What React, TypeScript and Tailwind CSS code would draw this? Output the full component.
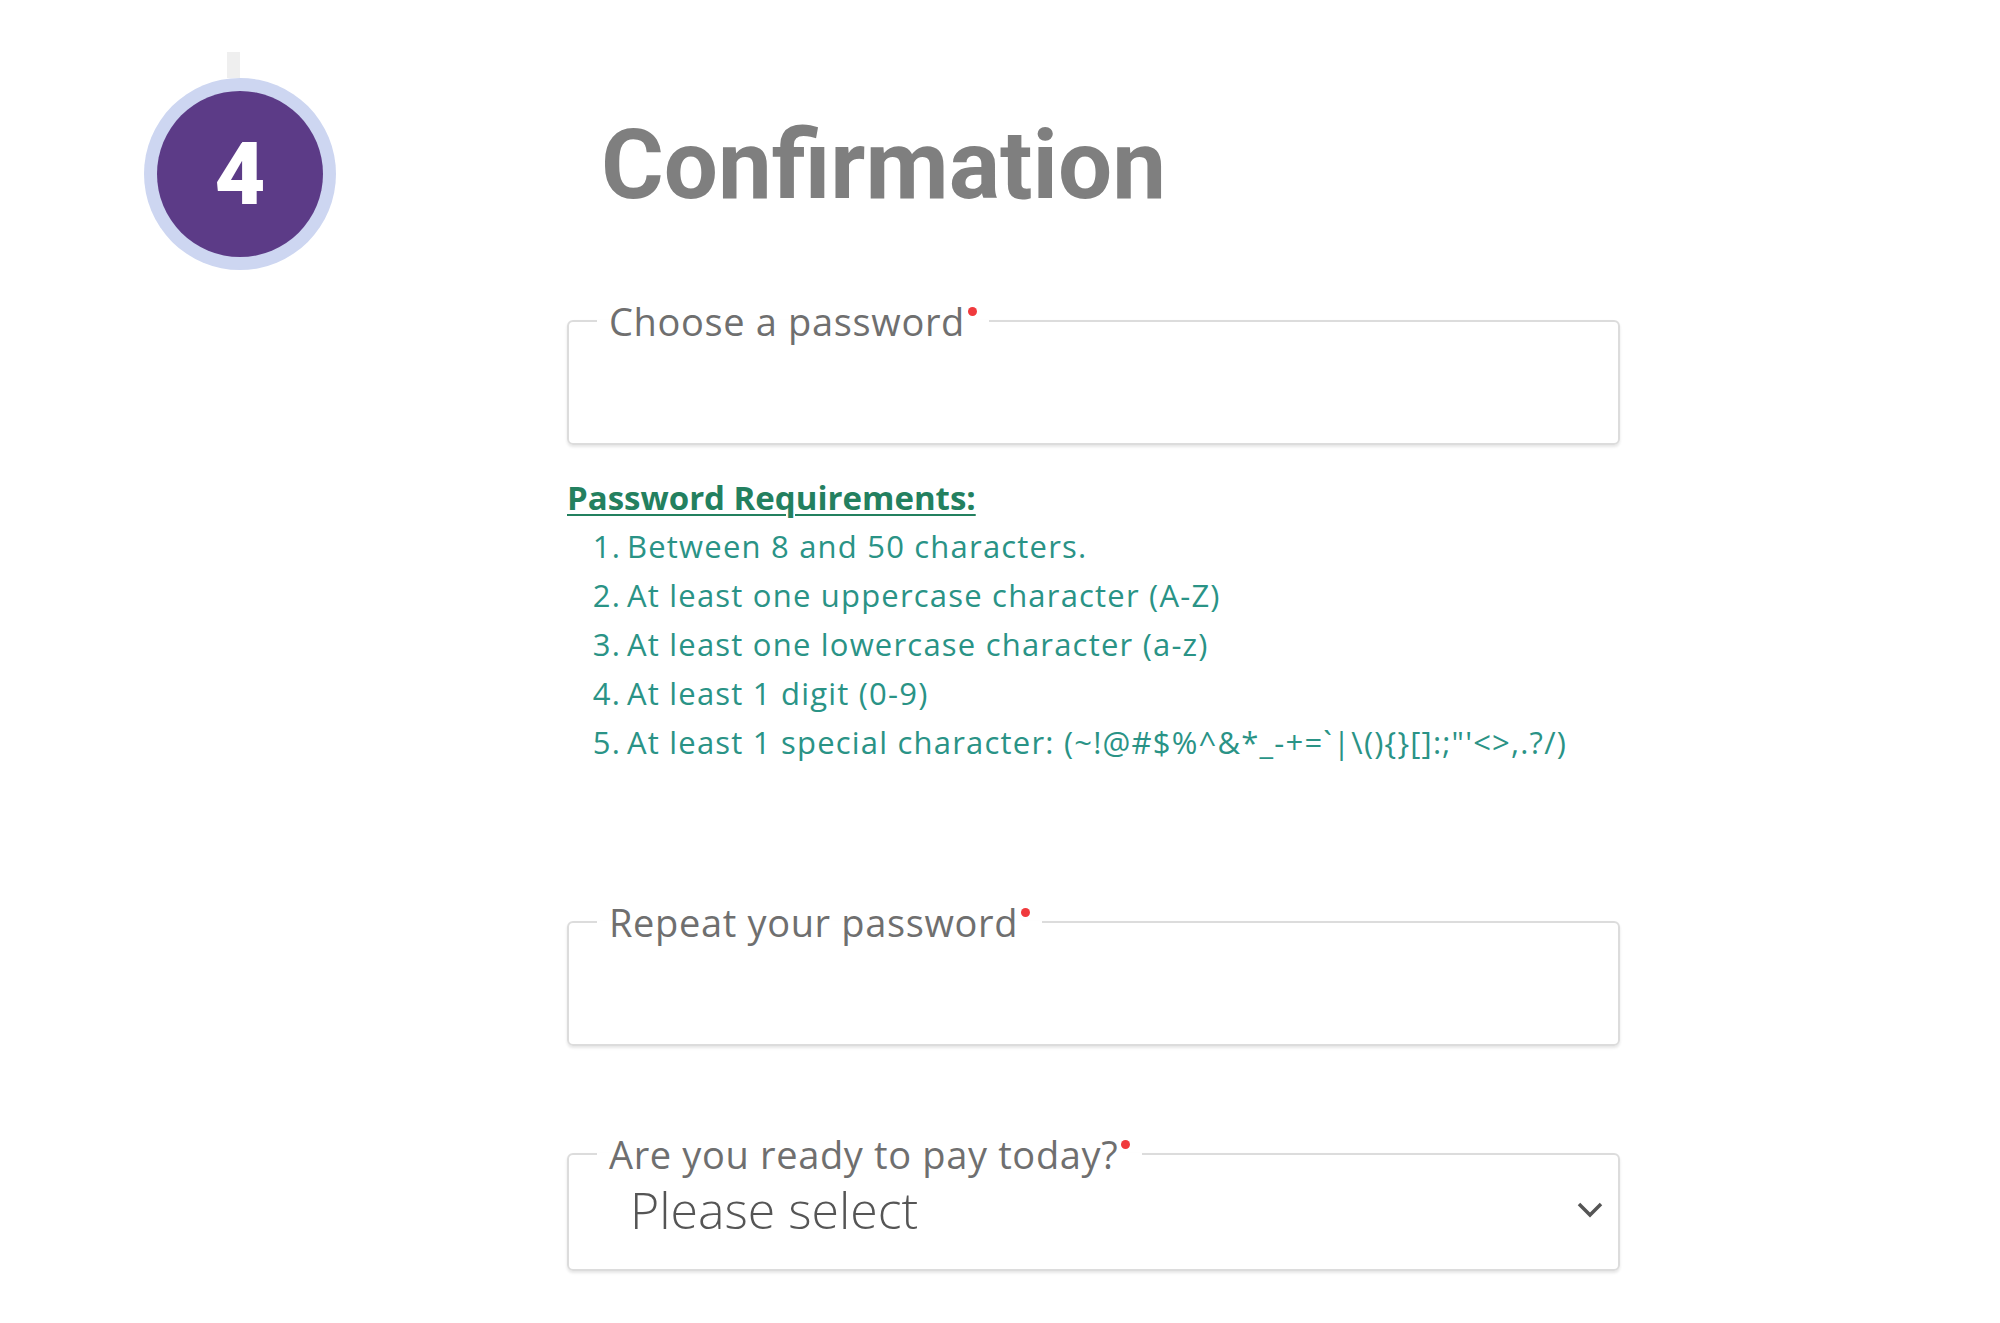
import React from "react";

const Req = () => (
  <span aria-label="required" className="ml-[3px] mt-[8px] inline-block h-[9px] w-[9px] rounded-full bg-[#f03a3d] align-top" />
);

function Field({ label, children, h }: { label: string; children?: React.ReactNode; h: string }) {
  return (
    <fieldset className="m-0 rounded-[6px] border-2 border-[#dcdcdc] p-0 shadow-[0_2px_3px_rgba(0,0,0,0.10)]">
      <legend
        className="ml-[28px] px-[12px] text-[38px] leading-[44px] tracking-[0.65px] text-[#6f6f6f]"
        style={{ fontFamily: "'Open Sans', sans-serif" }}
      >
        {label}
        <Req />
      </legend>
      <div className={h}>{children}</div>
    </fieldset>
  );
}

export default function App() {
  const items = [
    "Between 8 and 50 characters.",
    "At least one uppercase character (A-Z)",
    "At least one lowercase character (a-z)",
    "At least 1 digit (0-9)",
    "At least 1 special character: (~!@#$%^&*_-+=`|\\(){}[]:;\"'<>,.?/)",
  ];
  return (
    <div className="min-h-[1323px] w-[2000px] bg-white pt-[52px]">
      <div className="flex">
        <div className="ml-[144px] flex w-[192px] flex-col">
          <div className="ml-[83px] h-[26px] w-[13px] bg-[#efefef]" />
          <div className="h-[192px] w-[192px] rounded-full bg-[#cdd6f1] p-[13px]">
            <div className="flex h-full w-full items-center justify-center rounded-full bg-[#5c3b87]">
              <span className="text-[88px] font-black leading-none text-white" style={{ fontFamily: "Roboto, sans-serif" }}>
                4
              </span>
            </div>
          </div>
        </div>
        <div className="ml-[231px] flex w-[1053px] flex-col">
          <h1
            className="mt-[65px] pl-[34px] text-[96px] font-bold leading-none tracking-normal text-[#7f7f7f]"
            style={{ fontFamily: "Roboto, sans-serif" }}
          >
            Confirmation
          </h1>
          <div className="mt-[86px]">
            <Field label="Choose a password" h="h-[100px]" />
          </div>
          <div className="mt-[28px]" style={{ fontFamily: "'Open Sans', sans-serif" }}>
            <div className="text-[33px] font-bold leading-[49px] text-[#23805f] underline decoration-2 underline-offset-4">
              Password Requirements:
            </div>
            <ol className="text-[31px] leading-[49px] tracking-[1.2px] text-[#2a9386]">
              {items.map((t, i) => (
                <li key={i} className="flex">
                  <span className="w-[54px] text-right">{i + 1}.</span>
                  <span className="ml-[6px]">{t}</span>
                </li>
              ))}
            </ol>
          </div>
          <div className="mt-[133px]">
            <Field label="Repeat your password" h="h-[100px]" />
          </div>
          <div className="mt-[86px]">
            <Field label="Are you ready to pay today?" h="flex h-[93px] items-start pl-[61px] pr-[14px]">
              <span
                className="mt-[9px] flex-1 text-[50px] font-light leading-none tracking-normal text-[#555555]"
                style={{ fontFamily: "'Open Sans', sans-serif" }}
              >
                Please select
              </span>
              <svg width="28" height="17" viewBox="0 0 28 17" fill="none" stroke="#555" strokeWidth="3.5" className="mt-[25px]">
                <path d="M3 3l11 11 11-11" />
              </svg>
            </Field>
          </div>
        </div>
      </div>
    </div>
  );
}
